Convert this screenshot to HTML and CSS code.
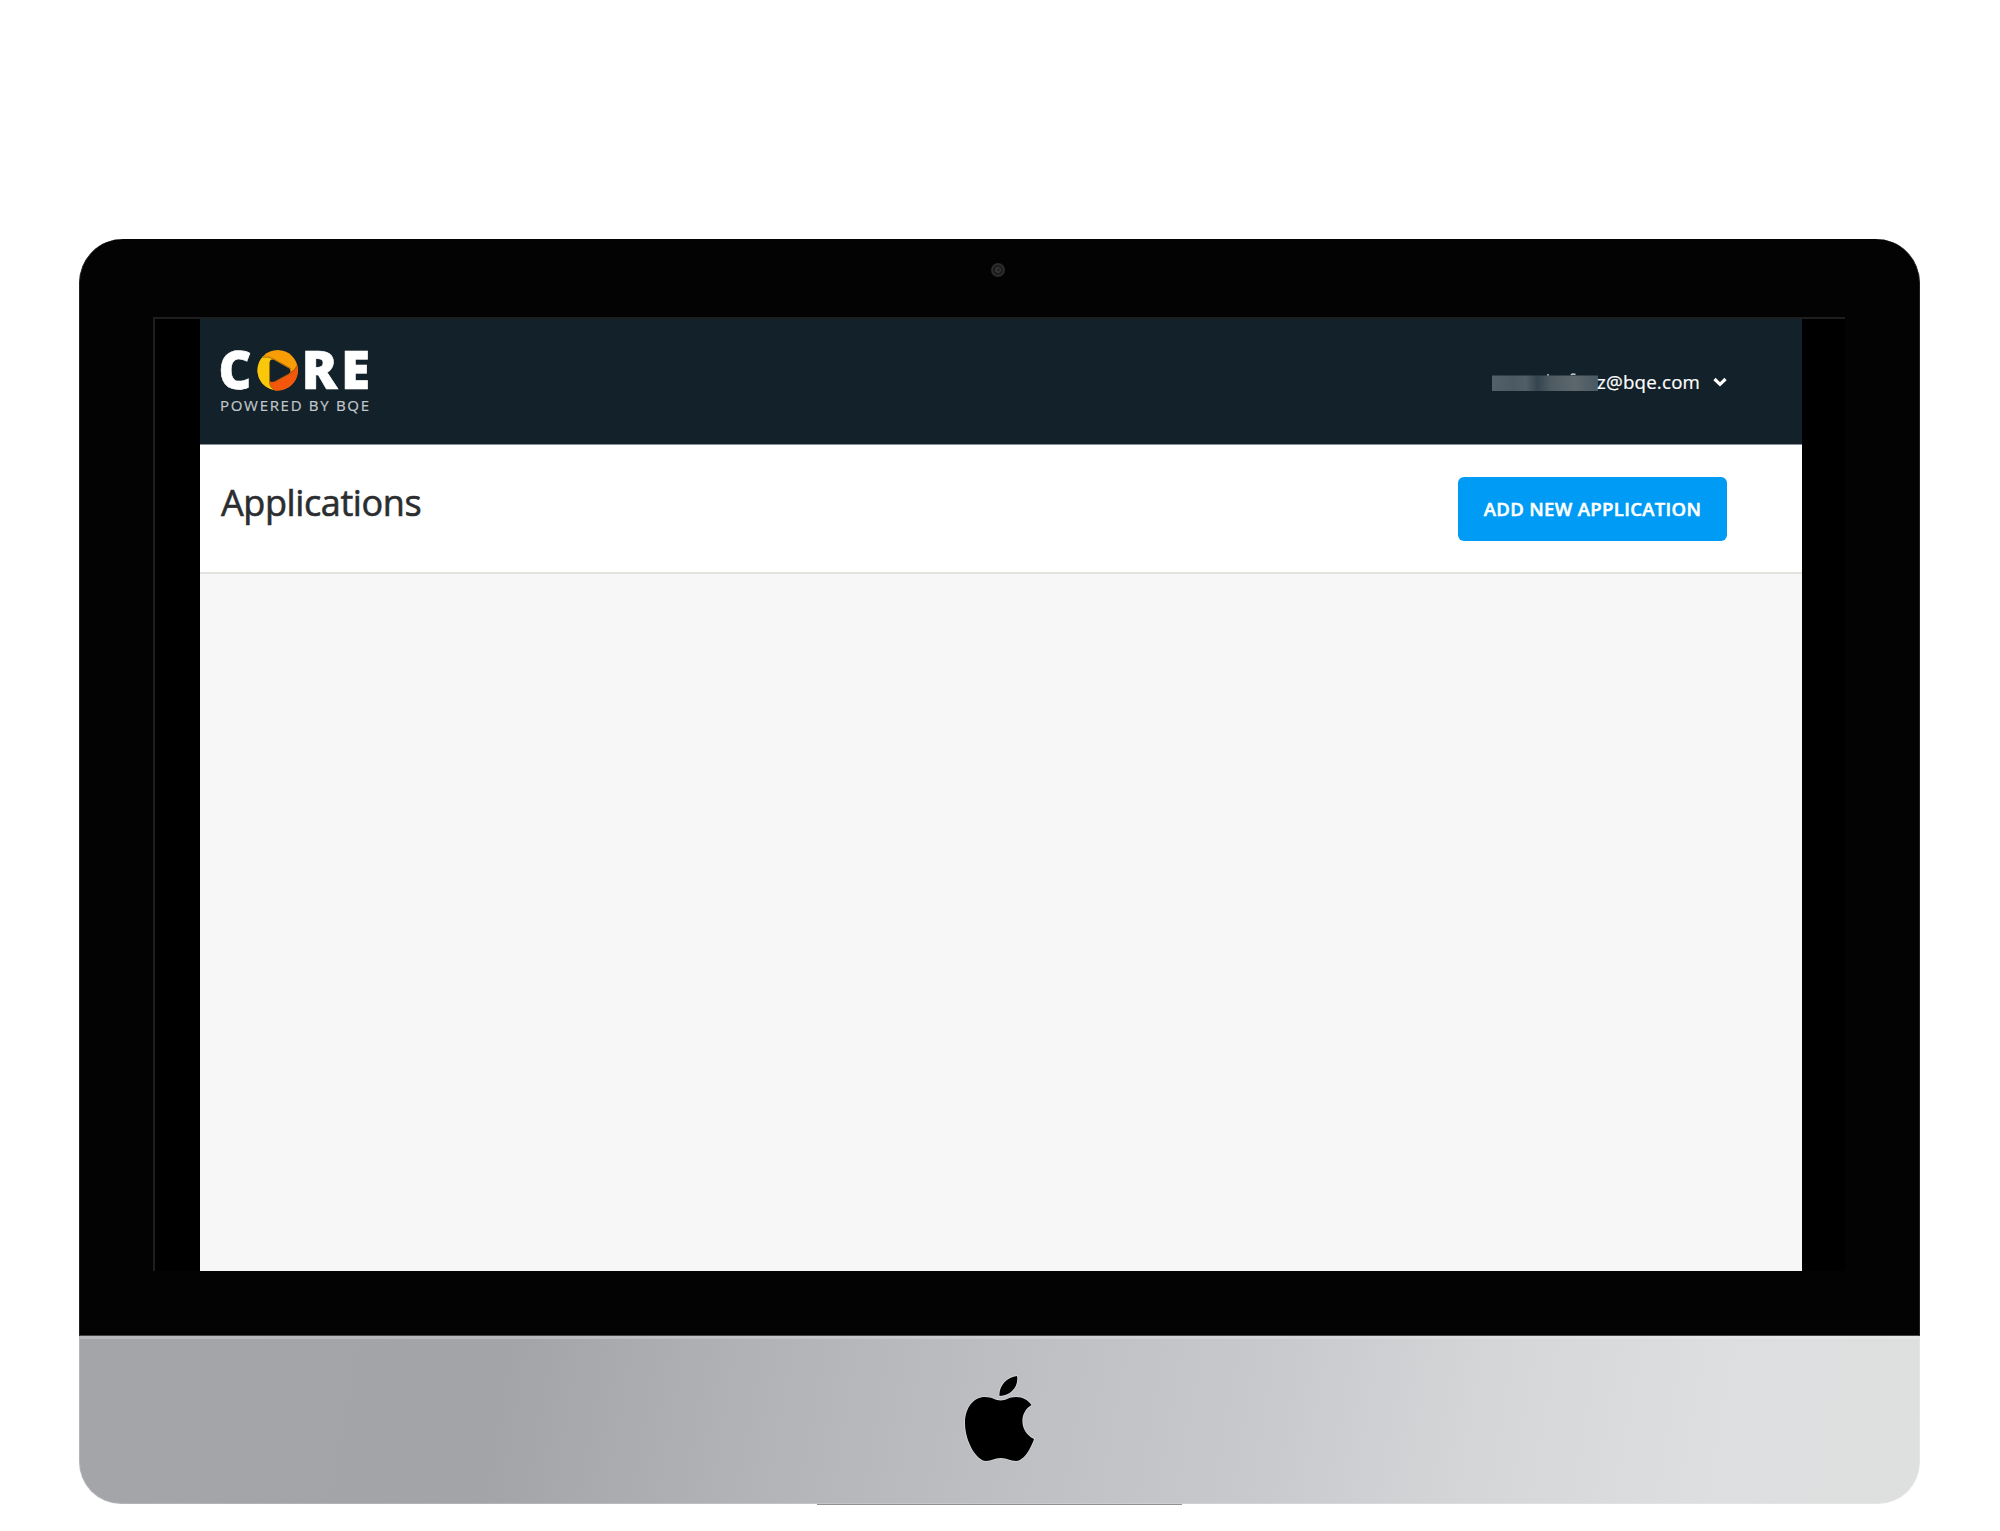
FILE: index.html
```html
<!DOCTYPE html>
<html lang="en">
<head>
<meta charset="utf-8">
<title>CORE - Applications</title>
<link rel="stylesheet" href="styles.css">
</head>
<body>
<div class="monitor">
  <div class="bezel">
    <div class="camera-bar">
      <svg class="camera" width="14" height="14" viewBox="0 0 14 14"><circle cx="7" cy="7" r="7" fill="#2b2b2b"/><circle cx="7" cy="7" r="4.8" fill="#1b1b1b"/><circle cx="7" cy="7" r="3" fill="#363636"/><circle cx="7.5" cy="7" r="1.4" fill="#202020"/></svg>
    </div>
    <div class="screen">
      <div class="app">
        <header class="header">
          <svg class="logo" width="150" height="66" viewBox="0 0 150 66" role="img" aria-label="CORE powered by BQE">
            <g class="logo-name">
              <text x="-2.5" y="39" textLength="33" lengthAdjust="spacingAndGlyphs">C</text>
              <text x="80.500" y="39">R</text>
              <text x="120" y="39">E</text>
            </g>
            <g transform="translate(-.7 -.8)">
            <circle cx="57.4" cy="21" r="20.2" fill="#f99d07"/>
            <path d="M42.5 7.3A20.2 20.2 0 0 0 56 41.2L49.5 32V14L52 8.8Q47 7 42.5 7.3Z" fill="#f9c80a"/>
            <path d="M77 16.2A20.2 20.2 0 0 1 54.5 41Q48.5 37 49.5 31L52 32L69 23Q75 20.5 77 16.2Z" fill="#f4570b"/>
            <path d="M49.500 12.500Q50 9 54 10.800L68.500 19Q72 21.500 68.500 24.500L55 32Q49.500 34 49.500 31Z" fill="#13212a"/>
            <path d="M42 8Q48 6.500 54 10.200L70.500 19.500M77 16Q75 21 69 24.700L54 32.700M49.300 13V31Q48.500 37 54 41" fill="none" stroke="#8f5a08" stroke-width=".8"/>
            </g>
            <text class="logo-tag" x="-1" y="60.5" textLength="149">POWERED BY BQE</text>
          </svg>
          <div class="account">
            <svg class="redaction" width="106" height="20" viewBox="0 0 106 20">
              <defs><linearGradient id="mask"><stop offset="0" stop-color="#53616a"/><stop offset=".2" stop-color="#4b5963"/><stop offset=".32" stop-color="#505e67"/><stop offset=".43" stop-color="#35444e"/><stop offset=".55" stop-color="#4e5a62"/><stop offset=".78" stop-color="#5c676d"/><stop offset="1" stop-color="#4a5861"/></linearGradient></defs>
              <path d="M56 3v2M79 4Q80.500 2.500 83.500 3.500" stroke="#c8cdd0" stroke-width="1.5" fill="none"/>
              <rect y="4.500" width="106" height="15.500" fill="url(#mask)"/>
            </svg>
            <span class="email">z@bqe.com</span>
            <svg class="chevron" width="14" height="10" viewBox="0 0 14 10"><path d="M1.500 2L7 7.300L12.500 2" fill="none" stroke="#fff" stroke-width="3.200"/></svg>
          </div>
        </header>
        <section class="toolbar">
          <h1 class="title">Applications</h1>
          <button class="add">ADD NEW APPLICATION</button>
        </section>
        <main class="content"></main>
      </div>
    </div>
  </div>
  <div class="chin">
    <svg class="apple" width="72" height="90" viewBox="0 0 72 90"><g fill="#000" stroke="#d8d9dc" stroke-width="1.600" paint-order="stroke"><path d="M53 3C55 13 47 23 35.500 23C34.500 13 43 4 53 3Z"/><path d="M36.500 27.500C42 27.500 45 24 52 24C59 24 64 27 67.500 32C55 39 55 59 70 66C67 75 60 88 52 88C46 88 43 85 37 85C30 85 28 88 22 88C13 88 1 69 1 50C1 34 10 24 21 24C28 24 32 27.500 36.500 27.500Z"/></g></svg>
  </div>
  <div class="foot"></div>
</div>
</body>
</html>
```
FILE: styles.css
```css
* { box-sizing: border-box; }
body { margin: 0; padding: 239px 80px 0 79px; height: 1531px; background: #fff; font-family: "Open Sans", sans-serif; overflow: hidden; }
.monitor { display: flex; flex-direction: column; }
.bezel { height: 1097px; padding: 0 74px; background: #030303; border: 1px solid #202020; border-top: 0; border-bottom-color: #484446; border-radius: 44px 44px 0 0; }
.camera-bar { height: 78px; display: flex; justify-content: center; padding: 24px 3px 0 0; }
.screen { width: 1692px; height: 954px; margin-left: -1px; background: #000; border: solid #1e1e1e; border-width: 2px 0 0 2px; padding: 0 43px 0 45px; }
.app { display: flex; flex-direction: column; width: 1602px; height: 952px; background: #f7f7f7; }
.header { height: 126px; background: #13212a; border-bottom: 1px solid #87909a; display: flex; justify-content: space-between; padding: 31px 75px 0 21px; }
.logo { overflow: visible; }
.logo-name { font-size: 53px; font-weight: 800; fill: #fff; stroke: #fff; stroke-width: .6px; }
.logo-tag { font-size: 15px; fill: #c2c7ca; stroke: #c2c7ca; stroke-width: .2px; }
.account { display: flex; align-items: center; height: 26px; margin-top: 19px; color: #fff; }
.redaction { margin-bottom: 2px; }
.email { font-size: 18.7px; width: 115px; margin-left: -1px; margin-right: 1px; letter-spacing: .2px; line-height: 26px; -webkit-text-stroke: .2px #fff; }
.toolbar { height: 129px; background: #fff; border-bottom: 2px solid #e4e3de; display: flex; justify-content: space-between; padding: 32px 75px 0 21px; }
.title { margin: 1px 0 0; color: #2b2d2f; font-size: 36px; line-height: 50px; font-weight: 400; letter-spacing: -.4px; -webkit-text-stroke: .6px #2b2d2f; }
.add { width: 269px; height: 64px; padding: 0 0 2px; border: 0; border-radius: 6px; background: #009bf5; color: #fff; font: 600 18.5px "Open Sans", sans-serif; letter-spacing: .35px; -webkit-text-stroke: .5px #fff; }
.content { flex: 1; }
.chin { height: 168px; display: flex; justify-content: center; padding-top: 34px; border: 1px solid rgba(255,255,255,.18); border-top: 3px solid rgba(255,255,255,.22); border-radius: 0 0 42px 42px; background: linear-gradient(100deg, #a4a5a9 0%, #a3a4a8 23%, #b2b3b7 37%, #bec0c4 52%, #c8c9cc 64%, #d5d6d8 76%, #dcdee0 88%, #dee0df 100%) border-box; }
.foot { width: 365px; height: 1px; margin-left: 738px; background: #929296; }
```
